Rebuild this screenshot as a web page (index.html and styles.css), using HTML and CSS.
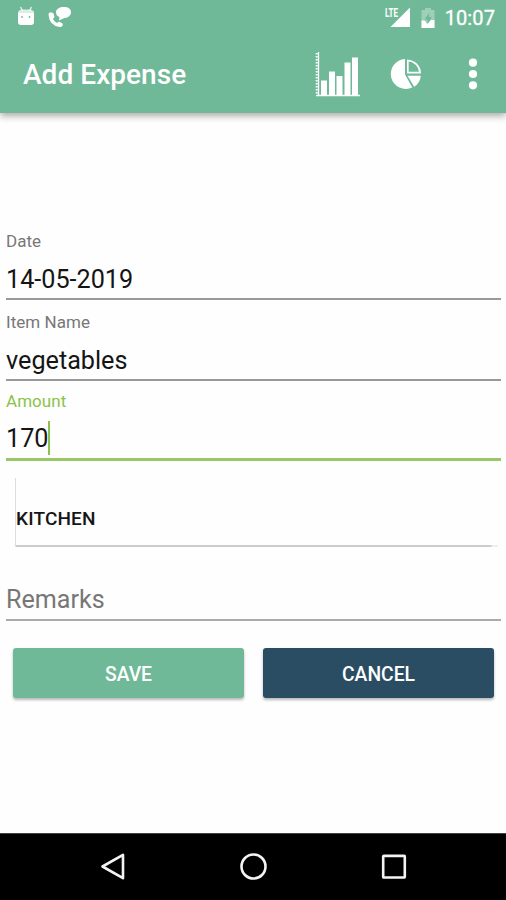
FILE: index.html
```html
<!DOCTYPE html>
<html lang="en">
<head>
<meta charset="utf-8">
<title>Add Expense</title>
<link rel="stylesheet" href="styles.css">
</head>
<body>
<header class="header">
  <div class="status">
    <svg class="robot" width="18" height="20" viewBox="0 0 18 20"><path d="M3.500 1l2 4M14.500 1l-2 4" stroke="#fff" stroke-opacity=".75" stroke-width="1.500"/><path d="M1 6Q2 3.500 6 3.500h6Q16 3.500 17 6v1H1z" fill="#fff" fill-opacity=".75"/><path d="M1 7h16v9q0 3-3 3H4q-3 0-3-3z" fill="#fff"/><circle cx="5" cy="11" r=".9" fill="#6fb998"/><circle cx="12.500" cy="11" r=".9" fill="#6fb998"/></svg>
    <svg class="call" width="24" height="22" viewBox="0 0 24 22" fill="#fff"><path d="M1.500 6.500Q5 6 5.500 7.500L6.500 11 5 13q1 2.500 4 4l2-1.500 3.500 2q.8.600 0 2.300-1 1.500-3 1.200Q1.500 19.500.5 9q0-1.800 1-2.500z"/><path d="M16 1c4.500 0 7 2 7 5.200S20 12 16.500 12L11 14.500l.5-3.500C9 10 8 8.500 8 6.200 8 3 11.500 1 16 1z"/></svg>
    <svg class="signal" width="28" height="22" viewBox="0 0 28 22" fill="#fff"><path d="M26 1.500v19.500H6.500z"/><text x="1" y="10.500" class="lte" textLength="13" lengthAdjust="spacingAndGlyphs">LTE</text></svg>
    <svg class="battery" width="14" height="20" viewBox="0 0 14 20" fill="#fff"><path d="M4 0h6v2h3.500v18H.5V2H4z" opacity=".32"/><path d="M8.500 4.500L3.500 11.500h3v4.500L11 9H8z" fill="#6fb998"/><path d="M.5 12.500h3l3 3.500 3.500-4h3.500v8H.5z"/></svg>
    <span class="time">10:07</span>
  </div>
  <div class="toolbar">
    <h1 class="title">Add Expense</h1>
    <svg class="bars" width="46" height="46" viewBox="0 0 46 46"><path d="M3.500 0v43" stroke="#fff" stroke-width="1.300"/><path d="M1.700 1v42" stroke="#fff" stroke-width="2" stroke-dasharray="1.500 1.500"/><path d="M1 43.500h44" stroke="#fff" stroke-width="1.600"/><path d="M6 28.500h6V43H6zM14 19.500h6V43h-6zM21.500 24h6v19h-6zM29.500 10.500h6V43h-6zM37 5.500h6V43h-6z" fill="#fff"/></svg>
    <svg class="pie" width="32" height="32" viewBox="0 0 32 32" fill="#fff"><path d="M15 0v15.500l7.300 13A15 15 0 1 1 15 0z"/><path d="M17.800 1.500v12.100h12.300A13 13 0 0 0 17.800 1.500z" fill="none" stroke="#fff" stroke-width="1.700"/><path d="M17.500 16.800h13.300a14.500 14.500 0 0 1-6.600 11z"/></svg>
    <svg class="more" width="10" height="34" viewBox="0 0 10 34" fill="#fff"><circle cx="5" cy="4.700" r="4.100"/><circle cx="5" cy="16" r="4.100"/><circle cx="5" cy="27.300" r="4.100"/></svg>
  </div>
</header>
<main class="form">
  <div class="field"><span class="label">Date</span><span class="value">14-05-2019</span></div>
  <div class="field"><span class="label">Item Name</span><span class="value">vegetables</span></div>
  <div class="field active"><span class="label">Amount</span><span class="value">170<i class="caret"></i></span></div>
  <div class="spinner"><span class="choice">KITCHEN</span></div>
  <div class="remarks"><span class="hint">Remarks</span></div>
  <div class="actions"><button class="btn save">SAVE</button><button class="btn cancel">CANCEL</button></div>
</main>
<nav class="nav">
  <svg width="28" height="30" viewBox="0 0 28 30"><path d="M3.500 14.500L24 2.800v23.400z"/></svg>
  <svg width="28" height="30" viewBox="0 0 28 30"><circle cx="14.500" cy="14.500" r="12"/></svg>
  <svg width="28" height="30" viewBox="0 0 28 30"><rect x="4.200" y="3.900" width="21.600" height="21.600" rx=".5"/></svg>
</nav>
</body>
</html>
```
FILE: styles.css
```css
* { box-sizing: border-box; }
body { margin: 0; width: 506px; height: 900px; display: flex; flex-direction: column; background: #fefefe; font-family: Roboto, sans-serif; color: #151515; overflow: hidden; }
svg { display: block; flex: none; }
.header { height: 113px; background: #6fb998; color: #fff; box-shadow: 0 3px 7px rgba(60, 40, 40, .4); }
.status { height: 36px; display: flex; align-items: flex-start; padding: 6px 11px 0 17px; }
.call { margin-left: 13px; }
.signal { margin-left: auto; }
.lte { font: 700 12.500px Roboto, sans-serif; }
.battery { margin: 2px 10px 0 9px; }
.time { font-size: 20px; line-height: 24px; letter-spacing: .1px; -webkit-text-stroke: .3px #fff; }
.toolbar { height: 77px; display: flex; align-items: center; padding: 0 28px 0 23px; }
.title { margin: 0 auto 0 0; font-size: 28px; line-height: 34px; font-weight: 500; letter-spacing: .05px; }
.bars { margin-right: 29px; }
.pie { margin-right: 46px; }
.form { flex: 1; padding: 118px 5px 0 6px; }
.field { height: 69px; margin-bottom: 12px; border-bottom: 2px solid #999; display: flex; flex-direction: column; }
.field:nth-child(2) { margin-bottom: 10px; }
.label { font-size: 17px; line-height: 20px; color: #777; letter-spacing: .05px; }
.value { font-size: 25.200px; line-height: 32px; margin-top: 13px; display: flex; align-items: center; }
.active { height: 70px; border-bottom: 3px solid #98c767; margin-bottom: 17px; }
.active .value { margin-top: 12px; }
.active .label { color: #8bc34a; }
.caret { width: 2px; height: 34px; margin-top: -2px; background: #8bc34a; }
.spinner { height: 69px; width: 483px; margin-left: 9px; border-left: 1px solid #ddd; background: linear-gradient(90deg, #ccc 475px, #eee 476px) bottom / 100% 2px no-repeat; display: flex; align-items: center; padding-top: 13px; }
.choice { font-size: 19px; line-height: 24px; font-weight: 500; letter-spacing: .15px; }
.remarks { height: 44px; margin-top: 30px; border-bottom: 2px solid #aaa; }
.hint { display: block; font-size: 25.100px; line-height: 46px; color: #777; }
.actions { display: flex; gap: 19px; padding: 0 7px; margin-top: 27px; }
.btn { flex: 1; height: 50px; border: 0; border-radius: 3px; color: #fff; font: 500 19.300px/50px Roboto, sans-serif; padding: 2px 0 0; box-shadow: 0 2px 3px rgba(0, 0, 0, .28); }
.save { background: #6fb998; }
.cancel { background: #2a4d63; }
.nav { height: 67px; background: #000; border-top: 1px solid #444; display: flex; justify-content: center; align-items: center; gap: 112px; }
.nav svg { fill: none; stroke: #f4f4f4; stroke-width: 2.600; stroke-linejoin: round; }
```
